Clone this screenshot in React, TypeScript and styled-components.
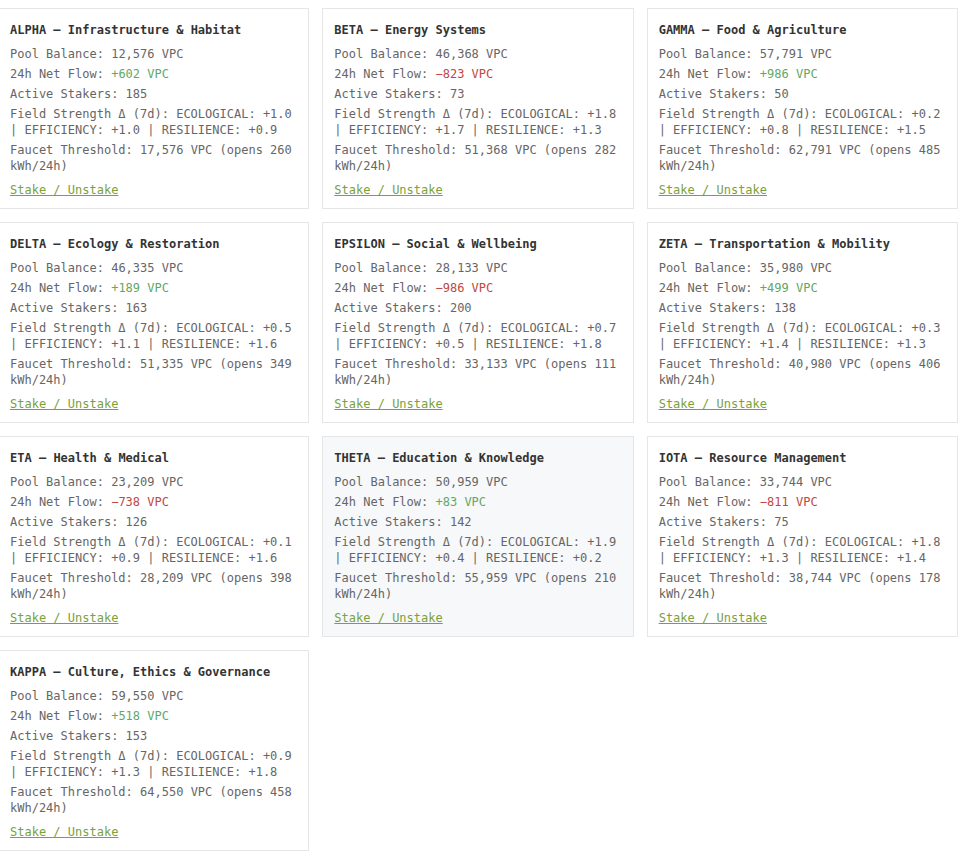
import styled, { createGlobalStyle } from 'styled-components';

const GlobalStyle = createGlobalStyle`
  html, body {
    margin: 0;
    padding: 0;
    background: #ffffff;
    overflow-x: hidden;
  }
  body {
    font-family: 'DejaVu Sans Mono', 'Liberation Mono', monospace;
  }
`;

type Pool = {
  code: string;
  name: string;
  balance: string;
  flow: number;
  stakers: number;
  eco: string;
  eff: string;
  res: string;
  threshold: string;
  kwh: number;
  active?: boolean;
};

const pools: Pool[] = [
  { code: 'ALPHA', name: 'Infrastructure & Habitat', balance: '12,576', flow: 602, stakers: 185, eco: '+1.0', eff: '+1.0', res: '+0.9', threshold: '17,576', kwh: 260 },
  { code: 'BETA', name: 'Energy Systems', balance: '46,368', flow: -823, stakers: 73, eco: '+1.8', eff: '+1.7', res: '+1.3', threshold: '51,368', kwh: 282 },
  { code: 'GAMMA', name: 'Food & Agriculture', balance: '57,791', flow: 986, stakers: 50, eco: '+0.2', eff: '+0.8', res: '+1.5', threshold: '62,791', kwh: 485 },
  { code: 'DELTA', name: 'Ecology & Restoration', balance: '46,335', flow: 189, stakers: 163, eco: '+0.5', eff: '+1.1', res: '+1.6', threshold: '51,335', kwh: 349 },
  { code: 'EPSILON', name: 'Social & Wellbeing', balance: '28,133', flow: -986, stakers: 200, eco: '+0.7', eff: '+0.5', res: '+1.8', threshold: '33,133', kwh: 111 },
  { code: 'ZETA', name: 'Transportation & Mobility', balance: '35,980', flow: 499, stakers: 138, eco: '+0.3', eff: '+1.4', res: '+1.3', threshold: '40,980', kwh: 406 },
  { code: 'ETA', name: 'Health & Medical', balance: '23,209', flow: -738, stakers: 126, eco: '+0.1', eff: '+0.9', res: '+1.6', threshold: '28,209', kwh: 398 },
  { code: 'THETA', name: 'Education & Knowledge', balance: '50,959', flow: 83, stakers: 142, eco: '+1.9', eff: '+0.4', res: '+0.2', threshold: '55,959', kwh: 210, active: true },
  { code: 'IOTA', name: 'Resource Management', balance: '33,744', flow: -811, stakers: 75, eco: '+1.8', eff: '+1.3', res: '+1.4', threshold: '38,744', kwh: 178 },
  { code: 'KAPPA', name: 'Culture, Ethics & Governance', balance: '59,550', flow: 518, stakers: 153, eco: '+0.9', eff: '+1.3', res: '+1.8', threshold: '64,550', kwh: 458 },
];

const App = () => {
  return (
    <>
      <GlobalStyle />
      <Grid>
        {pools.map((p) => (
          <Card key={p.code} $active={p.active}>
            <Title>
              {p.code} — {p.name}
            </Title>
            <Line>Pool Balance: {p.balance} VPC</Line>
            <Line>
              24h Net Flow:{' '}
              <Flow $up={p.flow >= 0}>
                {p.flow >= 0 ? `+${p.flow}` : `−${Math.abs(p.flow)}`} VPC
              </Flow>
            </Line>
            <Line>Active Stakers: {p.stakers}</Line>
            <Line>
              Field Strength Δ (7d): ECOLOGICAL: {p.eco} | EFFICIENCY: {p.eff} |
              RESILIENCE: {p.res}
            </Line>
            <Line>
              Faucet Threshold: {p.threshold} VPC (opens {p.kwh} kWh/24h)
            </Line>
            <StakeLink href='#'>Stake / Unstake</StakeLink>
          </Card>
        ))}
      </Grid>
    </>
  );
};

const Grid = styled.div`
  display: grid;
  grid-template-columns: repeat(3, 1fr);
  gap: 13px;
  width: 960px;
  margin-left: -2px;
  padding-top: 8px;
`;

const Card = styled.div<{ $active?: boolean }>`
  display: flex;
  flex-direction: column;
  align-items: flex-start;
  gap: 4px;
  border: 1px solid #e6e6e6;
  background: ${(p) => (p.$active ? '#f6f8fa' : '#ffffff')};
  padding: 13px 11px 10px;
  font-size: 12px;
  line-height: 16px;
  color: #666666;
`;

const Title = styled.div`
  font-weight: bold;
  color: #333333;
  margin-bottom: 4px;
`;

const Line = styled.div``;

const Flow = styled.span<{ $up: boolean }>`
  color: ${(p) => (p.$up ? '#5fa866' : '#c0483d')};
`;

const StakeLink = styled.a`
  margin-top: 4px;
  color: #7ba13a;
  text-decoration: underline;
`;

export default App;
